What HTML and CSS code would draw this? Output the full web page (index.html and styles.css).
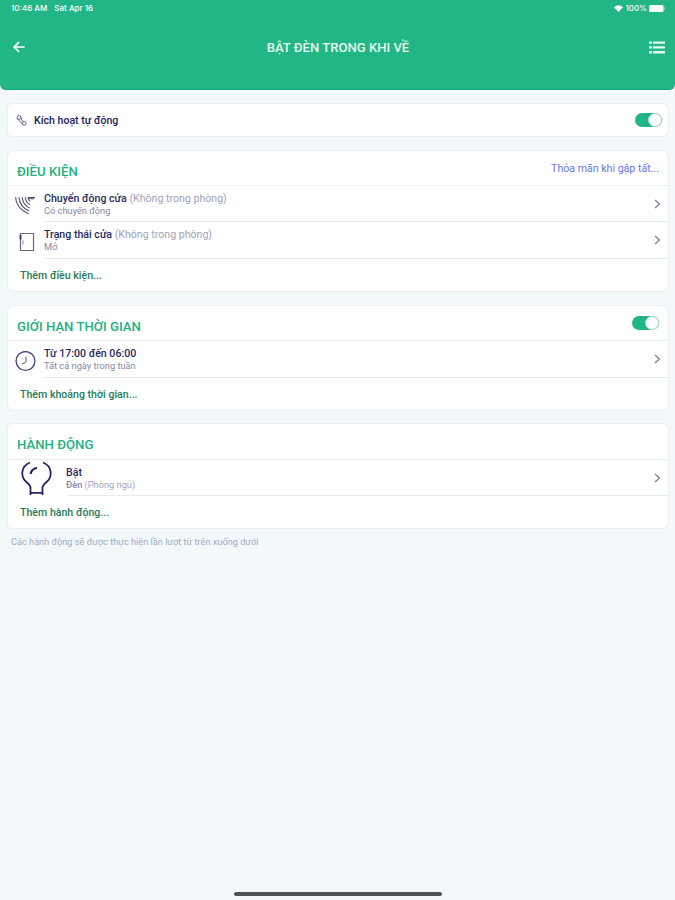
FILE: index.html
```html
<!DOCTYPE html>
<html lang="vi">
<head>
  <meta charset="UTF-8">
  <meta name="viewport" content="width=device-width, initial-scale=1.0">
  <title>Bật đèn trong khi về</title>
  <link rel="stylesheet" href="styles.css">
</head>
<body>
  <!-- Header -->
  <header class="header">
    <div class="status-bar">
      <span class="status-time">10:46 AM</span>
      <span class="status-date">Sat Apr 16</span>
      <div class="status-right">
        <svg width="9" height="7" viewBox="0 0 9 7"><path d="M0 2.2Q4.5-1.6 9 2.2L4.5 7Z" fill="#fff"/></svg>
        <span class="status-percent">100%</span>
        <svg width="17" height="7" viewBox="0 0 17 7"><rect width="14.5" height="7" rx="1.5" fill="#fff"/><path d="M15.6 2.4v2.2" stroke="#8ddbc1"/></svg>
      </div>
    </div>
    <div class="nav-bar">
      <svg class="back-icon" width="12" height="12" viewBox="0 0 12 12"><path d="M6 1.2L1.2 6L6 10.8M1.2 6H11.6" fill="none" stroke="#fff" stroke-width="1.7"/></svg>
      <h1 class="page-title">BẬT ĐÈN TRONG KHI VỀ</h1>
      <svg class="list-icon" width="16" height="13" viewBox="0 0 16 13"><path d="M0 1.6h3M4 1.6h12M0 6.4h3M4 6.4h12M0 11.2h3M4 11.2h12" stroke="#e4f8f1" stroke-width="2.4"/></svg>
    </div>
  </header>

  <main class="content">
    <!-- Auto activation -->
    <section class="card auto-card">
      <svg class="link-icon" width="11" height="11" viewBox="0 0 11 11" fill="none" stroke="#55557f" stroke-width="0.9"><circle cx="3" cy="2.5" r="1.9"/><circle cx="8.2" cy="8.3" r="1.9"/><path d="M1 3.4l3.2 3.4L6 8.6M5 2.4l1 3.2 1.4.8"/></svg>
      <span class="auto-label">Kích hoạt tự động</span>
      <span class="toggle"></span>
    </section>

    <!-- Conditions -->
    <section class="card">
      <div class="card-header">
        <h2>ĐIỀU KIỆN</h2>
        <a class="match-link">Thỏa mãn khi gặp tất...</a>
      </div>
      <div class="row row-first">
        <div class="row-icon">
          <svg width="20" height="19" viewBox="0 0 20 19" fill="none" stroke="#4b4b68" stroke-width="1.1"><path d="M.6 1.2Q1 12 13.5 17.8M3.9 1.2Q4.5 10.5 14 15M7.2 1.2Q7.8 8.6 14.5 12M10.3 1.2Q10.8 6.4 15 8.8M13 1.5Q13.3 4 15 5.4"/><path d="M13 1.5h7M14 2.7h5"/></svg>
        </div>
        <div class="row-body">
          <div class="row-text">
            <p class="row-title"><b>Chuyển động cửa</b> <span>(Không trong phòng)</span></p>
            <p class="row-sub">Có chuyển động</p>
          </div>
          <svg class="chevron" width="7" height="10" viewBox="0 0 7 10"><path d="M1 1l4.4 4L1 9"/></svg>
        </div>
      </div>
      <div class="row">
        <div class="row-icon door">
          <svg width="16" height="20" viewBox="0 0 16 20" fill="none" stroke="#686887" stroke-width="1.2"><path d="M1.5 1.5h13v17h-13z"/><path d="M1.5 3v4.5" stroke="#35356a" stroke-width="1.8"/><path d="M4 8.5v3l-1.2 1" stroke-width=".8"/></svg>
        </div>
        <div class="row-body">
          <div class="row-text">
            <p class="row-title"><b>Trạng thái cửa</b> <span>(Không trong phòng)</span></p>
            <p class="row-sub">Mở</p>
          </div>
          <svg class="chevron" width="7" height="10" viewBox="0 0 7 10"><path d="M1 1l4.4 4L1 9"/></svg>
        </div>
      </div>
      <div class="add-row">Thêm điều kiện...</div>
    </section>

    <!-- Time limit -->
    <section class="card time-card">
      <div class="card-header">
        <h2>GIỚI HẠN THỜI GIAN</h2>
        <span class="toggle"></span>
      </div>
      <div class="row">
        <div class="row-icon">
          <svg width="21" height="21" viewBox="0 0 21 21" fill="none" stroke="#4a4a7e"><circle cx="10.5" cy="10" r="9.4" stroke-width="1.4"/><path d="M11 5.5v5Q11 12.5 7 12.5" stroke-width=".9"/></svg>
        </div>
        <div class="row-body">
          <div class="row-text">
            <p class="row-title"><b>Từ 17:00 đến 06:00</b></p>
            <p class="row-sub">Tất cả ngày trong tuần</p>
          </div>
          <svg class="chevron" width="7" height="10" viewBox="0 0 7 10"><path d="M1 1l4.4 4L1 9"/></svg>
        </div>
      </div>
      <div class="add-row">Thêm khoảng thời gian...</div>
    </section>

    <!-- Actions -->
    <section class="card action-card">
      <div class="card-header">
        <h2>HÀNH ĐỘNG</h2>
      </div>
      <div class="row row-first">
        <div class="row-icon">
          <svg width="31" height="34" viewBox="0 0 31 34" fill="none" stroke="#252565" stroke-width="1.8"><path d="M9 1.5C0 5 -1 15.5 5.5 21Q9 24 9.5 26V34M22 1.5C31 5 32 15.5 25.5 21Q22 24 21.5 26V34M9 31.8H22"/><path d="M9.5 13Q10.5 8 16 6.8" stroke-width="2.2"/></svg>
        </div>
        <div class="row-body">
          <div class="row-text">
            <p class="row-title">Bật</p>
            <p class="row-sub"><b>Đèn</b> <span>(Phòng ngủ)</span></p>
          </div>
          <svg class="chevron" width="7" height="10" viewBox="0 0 7 10"><path d="M1 1l4.4 4L1 9"/></svg>
        </div>
      </div>
      <div class="add-row">Thêm hành động...</div>
    </section>
    <p class="note">Các hành động sẽ được thực hiện lần lượt từ trên xuống dưới</p>
  </main>

  <div class="home-indicator"></div>
</body>
</html>
```
FILE: styles.css
```css
/* General Styling */
*, *::after {
  box-sizing: border-box;
}

body {
  font-family: Roboto, "Liberation Sans", sans-serif;
  margin: 0;
  height: 900px;
  background: #f3f8fb;
  display: flex;
  flex-direction: column;
  overflow: hidden;
  white-space: nowrap;
}

h1, h2, p {
  margin: 0;
}

svg {
  display: block;
  flex-shrink: 0;
}

/* Header */
.header {
  height: 90px;
  background: #22b686;
  border-bottom: 1px solid #10aa77;
  border-radius: 0 0 6px 6px;
  color: white;
}

.status-bar {
  display: flex;
  align-items: center;
  height: 17px;
  padding: 0 9px 0 11px;
  font: 500 8px/17px Inter, sans-serif;
}

.status-date {
  margin-left: 7px;
}

.status-right {
  display: flex;
  align-items: center;
  gap: 2px;
  margin-left: auto;
}

.nav-bar {
  display: flex;
  align-items: center;
  justify-content: space-between;
  height: 60px;
  padding: 0 10px 0 13px;
}

.page-title {
  margin-left: 2px;
  font-size: 13.1px;
  font-weight: 500;
  color: #e4f8f1;
}

/* Cards */
.content {
  padding: 13px 6px 0 7px;
}

.card {
  background: white;
  border: 1px solid #e9eef1;
  border-radius: 7px;
  margin-bottom: 13px;
}

.auto-card {
  display: flex;
  align-items: center;
  height: 34px;
  padding: 0 6px 0 8px;
}

.auto-label {
  margin-left: 7px;
  font-size: 10.6px;
  font-weight: 500;
  color: #22225f;
}

.toggle {
  width: 27px;
  height: 14px;
  margin-left: auto;
  border-radius: 7px;
  background: #22b686;
  display: flex;
  justify-content: flex-end;
}

.toggle::after {
  content: "";
  width: 14px;
  height: 14px;
  border: 1px solid #b5d9cc;
  border-radius: 50%;
  background: white;
}

.card-header {
  display: flex;
  align-items: center;
  justify-content: space-between;
  height: 35px;
  padding: 0 9px;
  border-bottom: 1px solid #ebeef0;
}

.card-header h2 {
  padding-top: 6px;
  font-size: 13.2px;
  font-weight: 500;
  color: #22b27f;
}

.match-link {
  font-size: 10.6px;
  color: #6673ef;
}

/* Rows */
.row {
  display: flex;
  height: 37px;
}

.row-first {
  height: 36px;
}

.row-icon {
  width: 36px;
  padding: 10px 0 0 7px;
}

.row-icon.door {
  padding-left: 11px;
}

.row-body {
  flex: 1;
  display: flex;
  align-items: center;
  justify-content: space-between;
  padding-right: 7px;
  border-bottom: 1px solid #e9ecef;
}

.row-text {
  align-self: flex-start;
  padding-top: 6px;
}

.row-title {
  font-size: 10.6px;
  line-height: 13px;
  font-weight: 500;
  color: #292965;
}

.row-title b {
  font-weight: 500;
}

.row-title span {
  font-weight: 400;
  color: #a1a1bb;
}

.row-sub {
  font-size: 9.25px;
  line-height: 11px;
  color: #8589ac;
}

.row-sub b {
  font-weight: 500;
}

.row-sub span {
  color: #a3a7c0;
}

.chevron path {
  fill: none;
  stroke: #85858f;
  stroke-width: 1.4;
}

.add-row {
  height: 32px;
  padding-left: 12px;
  font-size: 10.6px;
  line-height: 33px;
  font-weight: 500;
  color: #287c59;
}

.time-card {
  margin-bottom: 12px;
}

/* Action card */
.action-card {
  margin-bottom: 0;
}

.action-card .card-header {
  height: 36px;
}

.action-card .row-icon {
  width: 58px;
  padding: 1px 0 0 13px;
}

.note {
  padding: 6px 0 0 4px;
  font-size: 9.2px;
  line-height: 14px;
  color: #a0abc2;
}

/* Home indicator */
.home-indicator {
  width: 208px;
  height: 4px;
  margin: auto auto 4px;
  border-radius: 2px;
  background: #515355;
}
```
